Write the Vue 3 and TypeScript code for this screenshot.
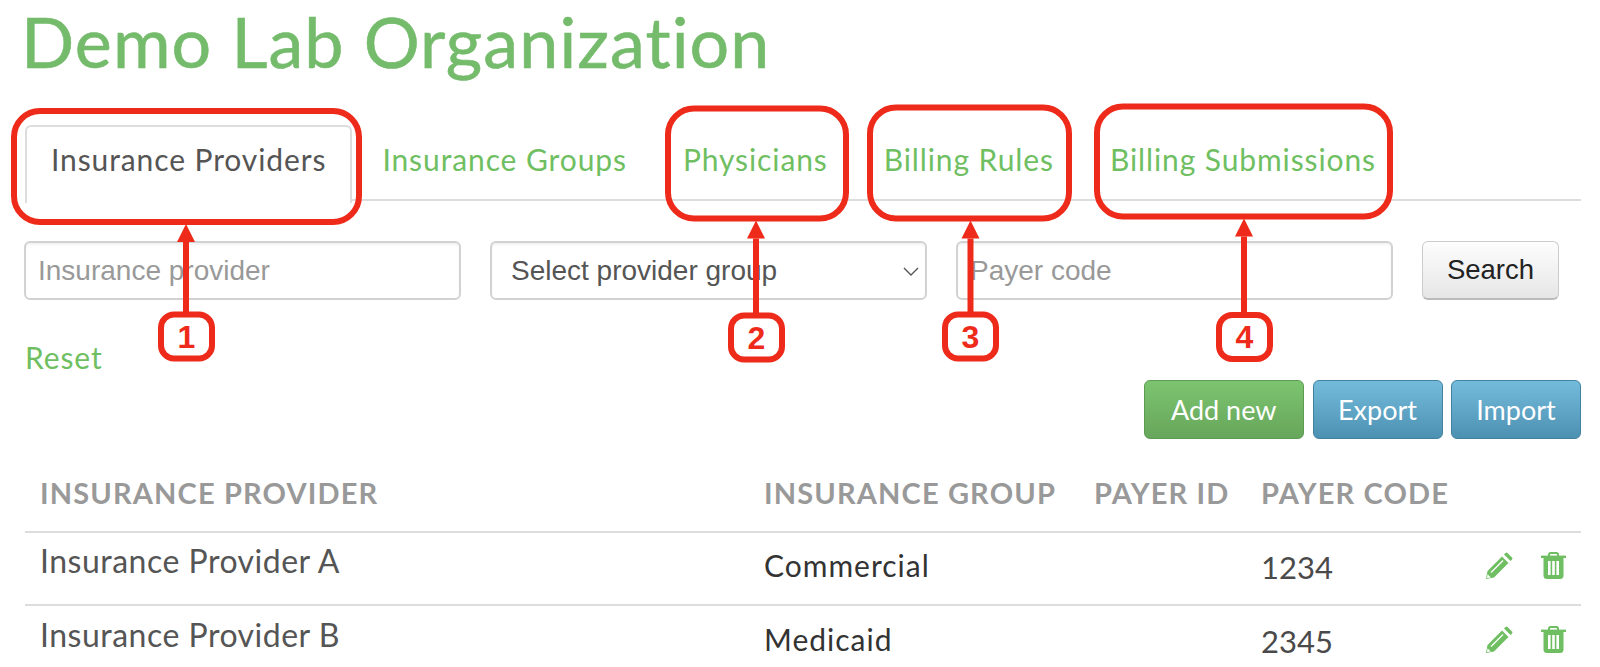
<script setup lang="ts">
const tabs = ['Insurance Providers', 'Insurance Groups', 'Physicians', 'Billing Rules', 'Billing Submissions']

const rows = [
  { name: 'Insurance Provider A', group: 'Commercial', code: '1234' },
  { name: 'Insurance Provider B', group: 'Medicaid', code: '2345' },
]

// callouts drawn on top of the screenshot
const callouts = [
  { n: 1, x: 14, y: 111, w: 345, h: 111, ax: 186, badgeX: 161, badgeY: 314.5 },
  { n: 2, x: 668, y: 108.5, w: 178, h: 110, ax: 756, badgeX: 731, badgeY: 315.5 },
  { n: 3, x: 870, y: 107.5, w: 199, h: 111, ax: 970.5, badgeX: 945, badgeY: 314.5 },
  { n: 4, x: 1097, y: 106.5, w: 293, h: 110, ax: 1244, badgeX: 1219, badgeY: 315 },
]
</script>

<template>
  <div class="page">
    <h1 class="title">Demo Lab Organization</h1>

    <nav class="tabs">
      <a v-for="(t, i) in tabs" :key="t" class="tab" :class="{ active: i === 0 }">{{ t }}</a>
    </nav>

    <div class="filters">
      <input class="field" placeholder="Insurance provider" />
      <div class="select-wrap">
        <select class="field select">
          <option>Select provider group</option>
        </select>
        <svg class="chevron" viewBox="0 0 16 9" width="16" height="9">
          <path d="M1 1l7 7 7-7" fill="none" stroke="#555" stroke-width="1.4" />
        </svg>
      </div>
      <input class="field" placeholder="Payer code" />
      <button class="search">Search</button>
    </div>

    <a class="reset">Reset</a>

    <div class="actions">
      <button class="btn green">Add new</button>
      <button class="btn blue">Export</button>
      <button class="btn blue">Import</button>
    </div>

    <div class="table">
      <div class="row head">
        <div>INSURANCE PROVIDER</div>
        <div>INSURANCE GROUP</div>
        <div>PAYER ID</div>
        <div>PAYER CODE</div>
        <div></div>
      </div>
      <div v-for="r in rows" :key="r.name" class="row body">
        <div class="name">{{ r.name }}</div>
        <div class="group">{{ r.group }}</div>
        <div></div>
        <div class="code">{{ r.code }}</div>
        <div class="icons">
          <svg viewBox="0 0 27 27" width="27" height="27" fill="#6fbf62">
            <path d="M1.5 19 16 4.5 22.5 11 8 25.5 0 27Z" />
            <path d="M18 2.5 19.5 1Q20.5 0 21.5 1L26 5.5Q27 6.5 26 7.500L24.500 9Z" />
            <path d="M5 20.500 17 8.500" stroke="#fff" stroke-width="1.3" />
            <path d="M1.6 22.2 4.8 25.4 1 26Z" fill="#fff" />
          </svg>
          <svg viewBox="0 0 25 27" width="25" height="27" fill="#6fbf62">
            <path d="M0 3.6h25v2.4H0z" />
            <path d="M8 4.500V2.600Q8 1 9.600 1h5.800Q17 1 17 2.600v1.900" fill="none" stroke="#6fbf62" stroke-width="2" />
            <path d="M2.500 6H22.500V23.500Q22.500 27 19 27H6Q2.500 27 2.500 23.500Z" />
            <path d="M7 9h2.600v14H7zM11.200 9h2.600v14h-2.600zM15.400 9H18v14h-2.600z" fill="#fff" />
          </svg>
        </div>
      </div>
    </div>

    <svg class="overlay" viewBox="0 0 1600 667" width="1600" height="667">
      <g v-for="c in callouts" :key="c.n">
        <rect :x="c.x" :y="c.y" :width="c.w" :height="c.h" rx="26" class="mark" />
        <path :d="`M${c.ax} ${c.y + c.h + 20}V${c.badgeY}`" class="mark" />
        <path :d="`M${c.ax} ${c.y + c.h + 2}l9 18h-18z`" class="tip" />
        <rect :x="c.badgeX" :y="c.badgeY" width="51" height="44" rx="13" class="mark" />
        <text :x="c.badgeX + 25.5" :y="c.badgeY + 33" class="num">{{ c.n }}</text>
      </g>
    </svg>
  </div>
</template>

<style>
html,
body {
  margin: 0;
  background: #fff;
  overflow: hidden;
}
</style>

<style scoped>
.page {
  position: relative;
  width: 1600px;
  height: 667px;
  box-sizing: border-box;
  padding: 0 19px 0 25px;
  overflow: hidden;
  font-family: Lato, "Open Sans", sans-serif;
  font-variant-ligatures: none;
}
.title {
  margin: 0 0 0 -4px;
  height: 125px;
  font-size: 70px;
  line-height: 83px;
  font-weight: 400;
  letter-spacing: 1.1px;
  color: #74bb6b;
  -webkit-text-stroke: 0.6px #74bb6b;
}
.tabs {
  display: flex;
  gap: 4px;
  height: 74px;
  border-bottom: 2px solid #ddd;
}
.tab {
  padding: 0 24px;
  font-size: 30px;
  letter-spacing: 0.9px;
  line-height: 65px;
  color: #6fbf62;
  border: 2px solid transparent;
  border-bottom: 0;
}
.tab.active {
  color: #555;
  background: #fff;
  height: 76px;
  border-color: #ddd;
  border-radius: 6px 6px 0 0;
}
.filters {
  display: flex;
  gap: 29px;
  margin: 40px 0 0 -1px;
  height: 59px;
}
.field {
  width: 437px;
  height: 59px;
  box-sizing: border-box;
  border: 2px solid #d2d2d2;
  border-radius: 6px;
  padding: 0 12px;
  font-family: "Liberation Sans", Arial, sans-serif;
  font-size: 28px;
  color: #555;
  background: #fff;
  box-shadow: inset 0 2px 2px rgba(0, 0, 0, 0.05);
  outline: none;
}
.field::placeholder {
  color: #999;
}
.select-wrap {
  position: relative;
}
.select {
  appearance: none;
  padding-left: 19px;
}
.chevron {
  position: absolute;
  right: 8px;
  top: 26px;
}
.search {
  width: 137px;
  height: 59px;
  border: 1px solid #ccc;
  border-bottom: 2px solid #bbb;
  border-radius: 6px;
  font-family: "Liberation Sans", Arial, sans-serif;
  font-size: 27.5px;
  color: #222;
  background: linear-gradient(#fdfdfd, #e6e6e6);
  padding: 0;
}
.reset {
  display: block;
  margin-top: 39px;
  height: 41px;
  font-size: 30px;
  letter-spacing: 0.9px;
  line-height: 36px;
  color: #6fbf62;
}
.actions {
  display: flex;
  justify-content: flex-end;
  gap: 8.5px;
}
.btn {
  height: 59px;
  border-radius: 6px;
  font-family: Lato, "Open Sans", sans-serif;
  font-size: 27px;
  color: #fff;
  padding: 0;
}
.green {
  width: 160.5px;
  border: 1px solid #5d9a52;
  background: linear-gradient(#7cc470, #67a65b);
}
.blue {
  width: 130px;
  border: 1px solid #43829f;
  background: linear-gradient(#74bbdb, #4d91b2);
}
.row {
  display: grid;
  grid-template-columns: 739px 330px 167px 223px 97px;
  border-bottom: 2px solid #ddd;
  box-sizing: border-box;
}
.head {
  height: 94px;
  padding-top: 37px;
  font-size: 29px;
  letter-spacing: 1.15px;
  line-height: 34px;
  font-weight: 700;
  color: #999;
}
.head > div:first-child {
  padding-left: 15px;
}
.body {
  height: 73px;
}
.body + .body {
  padding-top: 1px;
}
.name {
  padding: 10px 0 0 15px;
  font-size: 32px;
  letter-spacing: 0.5px;
  line-height: 36px;
  color: #555;
}
.group {
  padding-top: 15px;
  font-size: 30px;
  letter-spacing: 1px;
  line-height: 34px;
  color: #333;
}
.code {
  padding-top: 16px;
  font-size: 31px;
  line-height: 36px;
  color: #4a4a4a;
}
.icons {
  display: flex;
  gap: 28px;
  padding-top: 19px;
  align-items: flex-start;
  justify-content: flex-end;
  padding-right: 15px;
}
.overlay {
  position: absolute;
  left: 0;
  top: 0;
  pointer-events: none;
}
.mark {
  fill: none;
  stroke: #ee2b1b;
  stroke-width: 6;
}
.tip {
  fill: #ee2b1b;
}
.num {
  font-family: "Liberation Sans", Arial, sans-serif;
  font-weight: 700;
  font-size: 32px;
  fill: #ee2b1b;
  text-anchor: middle;
}
</style>
